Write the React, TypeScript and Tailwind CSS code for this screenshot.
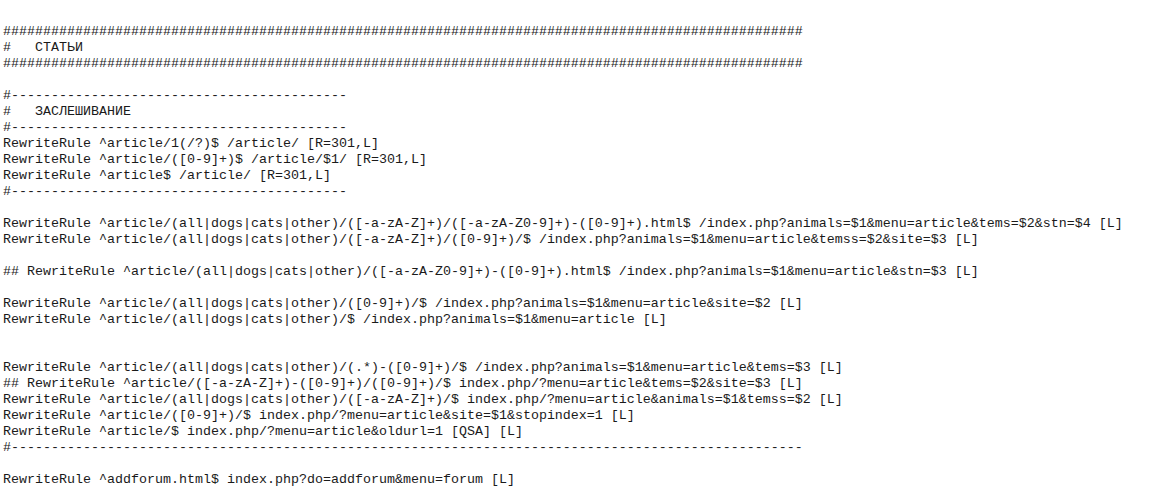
const lines: string[] = [
  "#".repeat(100),
  "#   СТАТЬИ",
  "#".repeat(100),
  "",
  "#" + "-".repeat(42),
  "#   ЗАСЛЕШИВАНИЕ",
  "#" + "-".repeat(42),
  "RewriteRule ^article/1(/?)$ /article/ [R=301,L]",
  "RewriteRule ^article/([0-9]+)$ /article/$1/ [R=301,L]",
  "RewriteRule ^article$ /article/ [R=301,L]",
  "#" + "-".repeat(42),
  "",
  "RewriteRule ^article/(all|dogs|cats|other)/([-a-zA-Z]+)/([-a-zA-Z0-9]+)-([0-9]+).html$ /index.php?animals=$1&menu=article&tems=$2&stn=$4 [L]",
  "RewriteRule ^article/(all|dogs|cats|other)/([-a-zA-Z]+)/([0-9]+)/$ /index.php?animals=$1&menu=article&temss=$2&site=$3 [L]",
  "",
  "## RewriteRule ^article/(all|dogs|cats|other)/([-a-zA-Z0-9]+)-([0-9]+).html$ /index.php?animals=$1&menu=article&stn=$3 [L]",
  "",
  "RewriteRule ^article/(all|dogs|cats|other)/([0-9]+)/$ /index.php?animals=$1&menu=article&site=$2 [L]",
  "RewriteRule ^article/(all|dogs|cats|other)/$ /index.php?animals=$1&menu=article [L]",
  "",
  "",
  "RewriteRule ^article/(all|dogs|cats|other)/(.*)-([0-9]+)/$ /index.php?animals=$1&menu=article&tems=$3 [L]",
  "## RewriteRule ^article/([-a-zA-Z]+)-([0-9]+)/([0-9]+)/$ index.php/?menu=article&tems=$2&site=$3 [L]",
  "RewriteRule ^article/(all|dogs|cats|other)/([-a-zA-Z]+)/$ index.php/?menu=article&animals=$1&temss=$2 [L]",
  "RewriteRule ^article/([0-9]+)/$ index.php/?menu=article&site=$1&stopindex=1 [L]",
  "RewriteRule ^article/$ index.php/?menu=article&oldurl=1 [QSA] [L]",
  "#" + "-".repeat(99),
  "",
  "RewriteRule ^addforum.html$ index.php?do=addforum&menu=forum [L]",
];

export default function App() {
  return (
    <div className="w-[1156px] h-[493px] bg-white overflow-hidden">
      <pre className="m-0 pt-[24px] pl-[3px] font-['Liberation_Mono','Courier_New',monospace] text-[13.333px] leading-[16px] text-[#1a1a1a] whitespace-pre">
        {lines.map((l, i) => (
          <div key={i} className="h-[16px]">{l}</div>
        ))}
      </pre>
    </div>
  );
}
